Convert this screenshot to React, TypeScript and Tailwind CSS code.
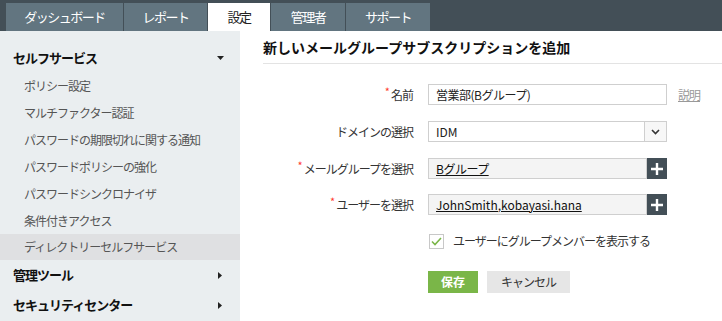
import React from "react";

const font = { fontFamily: '"Noto Sans CJK JP", "Noto Sans", sans-serif' };

function Plus() {
  return (
    <div className="w-[20px] h-[21px] bg-[#434f57] flex items-center justify-center">
      <svg width="12" height="12" viewBox="0 0 12 12">
        <path d="M6 0v12M0 6h12" stroke="#fff" strokeWidth="2.4" />
      </svg>
    </div>
  );
}

function Label({ req, children }: { req?: boolean; children: React.ReactNode }) {
  return (
    <div className="w-[165px] text-right pr-[15px] text-[12px] tracking-[-1px] text-[#333] leading-none">
      {req && <span className="text-[#ff3b30] text-[11px] relative top-[-4px] mr-[2px]">*</span>}
      {children}
    </div>
  );
}

export default function App() {
  const tabs = [
    { t: "ダッシュボード", w: "w-[117px]" },
    { t: "レポート", w: "w-[83px]" },
    { t: "設定", w: "w-[62px]", active: true },
    { t: "管理者", w: "w-[74px]" },
    { t: "サポート", w: "w-[84px]" },
  ];
  const items = [
    "ポリシー設定",
    "マルチファクター認証",
    "パスワードの期限切れに関する通知",
    "パスワードポリシーの強化",
    "パスワードシンクロナイザ",
    "条件付きアクセス",
  ];
  return (
    <div className="w-[722px] h-[321px] overflow-hidden bg-white flex flex-col" style={font}>
      <div className="h-[31px] bg-[#434f57] flex items-end pl-[6px] gap-[1px] shrink-0">
        {tabs.map((tb) => (
          <div
            key={tb.t}
            className={`${tb.w} h-[28px] flex items-center justify-center text-[13px] tracking-[-1.5px] ${
              tb.active ? "bg-white text-[#222]" : "bg-[#627580] text-white"
            }`}
          >
            {tb.t}
          </div>
        ))}
      </div>
      <div className="flex flex-1">
        <div className="w-[240px] bg-[#eaeef0] flex flex-col">
          <div className="h-[28px] mt-[13px] flex items-center justify-between pl-[13px] pr-[16px]">
            <span className="text-[13px] tracking-[-1px] font-bold text-[#111]">セルフサービス</span>
            <svg width="7" height="4" viewBox="0 0 7 4"><path d="M0 0h7L3.5 4z" fill="#222" /></svg>
          </div>
          {items.map((it) => (
            <div key={it} className="h-[27px] flex items-center pl-[24px] text-[12px] tracking-[-1px] text-[#555]">
              {it}
            </div>
          ))}
          <div className="h-[26px] flex items-center pl-[24px] text-[12px] tracking-[-1px] text-[#555] bg-[#dfe0e2]">
            ディレクトリーセルフサービス
          </div>
          <div className="h-[30px] flex items-center justify-between pl-[13px] pr-[18px]">
            <span className="text-[13px] tracking-[-1px] font-bold text-[#111]">管理ツール</span>
            <svg width="4" height="7" viewBox="0 0 4 7"><path d="M0 0v7L4 3.5z" fill="#222" /></svg>
          </div>
          <div className="h-[30px] flex items-center justify-between pl-[13px] pr-[18px]">
            <span className="text-[13px] tracking-[-1px] font-bold text-[#111]">セキュリティセンター</span>
            <svg width="4" height="7" viewBox="0 0 4 7"><path d="M0 0v7L4 3.5z" fill="#222" /></svg>
          </div>
        </div>
        <div className="flex-1 pl-[23px] flex flex-col">
          <div className="h-[33px] flex items-center border-b border-[#e3e3e3] text-[14px] font-bold text-[#111]">
            新しいメールグループサブスクリプションを追加
          </div>
          <div className="flex flex-col mt-[20px] gap-[15px]">
            <div className="flex items-center">
              <Label req>名前</Label>
              <div className="w-[239px] h-[21px] border border-[#cfcfcf] flex items-center pl-[7px] text-[12px] tracking-[-0.5px] text-[#222]">
                営業部(Bグループ)
              </div>
              <span className="ml-[11px] text-[12px] tracking-[-1px] text-[#999] underline">説明</span>
            </div>
            <div className="flex items-center mt-[1px]">
              <Label>ドメインの選択</Label>
              <div className="w-[239px] h-[21px] border border-[#cfcfcf] flex items-center text-[12px] text-[#222]">
                <span className="flex-1 pl-[7px]">IDM</span>
                <div className="w-[22px] h-full border-l border-[#cfcfcf] bg-[#f7f7f7] flex items-center justify-center">
                  <svg width="9" height="6" viewBox="0 0 9 6"><path d="M1 1l3.5 3.5L8 1" stroke="#333" strokeWidth="1.6" fill="none" /></svg>
                </div>
              </div>
            </div>
            <div className="flex items-center mt-[1px]">
              <Label req>メールグループを選択</Label>
              <div className="w-[219px] h-[21px] border border-[#cfcfcf] bg-[#f4f4f4] flex items-center pl-[7px] text-[12px] tracking-[-0.5px] text-[#111] underline">
                Bグループ
              </div>
              <Plus />
            </div>
            <div className="flex items-center">
              <Label req>ユーザーを選択</Label>
              <div className="w-[219px] h-[21px] border border-[#cfcfcf] bg-[#f4f4f4] flex items-center pl-[7px] text-[12px] text-[#111] underline">
                JohnSmith,kobayasi.hana
              </div>
              <Plus />
            </div>
            <div className="flex items-center pl-[166px] mt-[2px]">
              <div className="w-[15px] h-[15px] border border-[#c8c8c8] bg-white flex items-center justify-center">
                <svg width="11" height="9" viewBox="0 0 11 9"><path d="M1 4.5l3 3L10 1" stroke="#7ab648" strokeWidth="1.6" fill="none" /></svg>
              </div>
              <span className="ml-[9px] text-[12px] tracking-[-1px] text-[#333]">ユーザーにグループメンバーを表示する</span>
            </div>
            <div className="flex items-center pl-[165px] mt-[6px] gap-[9px]">
              <div className="w-[50px] h-[22px] bg-[#7ab648] text-white text-[12px] font-bold flex items-center justify-center">保存</div>
              <div className="w-[83px] h-[22px] bg-[#e6e6e6] text-[#333] text-[12px] tracking-[-1px] flex items-center justify-center">キャンセル</div>
            </div>
          </div>
        </div>
      </div>
    </div>
  );
}
